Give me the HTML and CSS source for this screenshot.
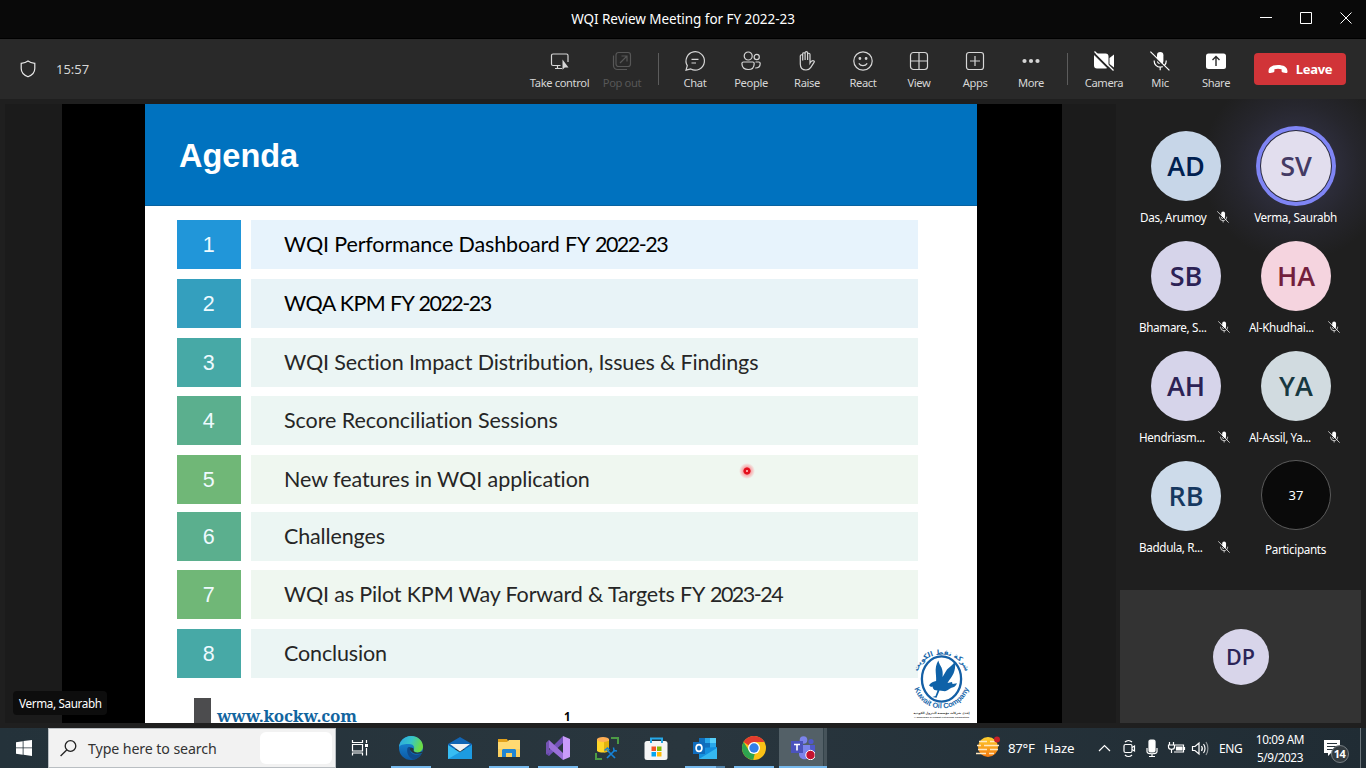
FILE: index.html
```html
<!DOCTYPE html>
<html lang="en">
<head>
<meta charset="utf-8">
<title>WQI Review Meeting for FY 2022-23</title>
<link rel="stylesheet" href="styles.css">
</head>
<body>
<svg width="0" height="0" class="defs">
  <symbol id="mic-off" viewBox="0 0 20 20">
    <rect x="7" y="1" width="6.4" height="12" rx="3.2" fill="currentColor"/>
    <path d="M4.2 9.5v.7a6 6 0 0 0 12 0v-.7M10.2 16v3.2" fill="none" stroke="currentColor" stroke-width="1.2"/>
    <path d="M0 1.8 18.5 20" stroke="var(--cut)" stroke-width="1.6"/>
    <path d="M.4.6 19.4 19.4" stroke="currentColor" stroke-width="1.2"/>
  </symbol>
</svg>
<div class="window">
  <header class="titlebar">
    <span class="title">WQI Review Meeting for FY 2022-23</span>
    <div class="controls">
      <svg width="100" height="20" viewBox="0 0 100 20" fill="none" stroke="#fff"><path d="M0 8.5h12M40.5 3.5h11v11h-11zM80.500 3.5l11 11M91.500 3.5l-11 11"/></svg>
    </div>
  </header>
  <div class="toolbar">
    <svg class="shield" width="16" height="18" viewBox="0 0 16 18" fill="none" stroke="#e8e8e8" stroke-width="1.2"><path d="M8 1C6 2.500 3.700 3 1.200 3.300v5.200C1.200 12.500 3.500 15 8 16.800c4.500-1.800 6.800-4.300 6.800-8.300V3.300C12.300 3 10 2.500 8 1z"/></svg>
    <span class="clock">15:57</span>
    <nav class="tools">
      <div class="tool wide"><svg viewBox="0 0 20 20"><path d="M10.500 14.500H3a1.500 1.500 0 0 1-1.500-1.500V4.500A1.500 1.500 0 0 1 3 3h13.500A1.500 1.500 0 0 1 18 4.500V11M7.500 14.500v3M5 17.500h7"/><path class="f" d="M12.500 8.500v10.300l2.300-2.400h3.700z" stroke="none"/></svg><span>Take control</span></div>
      <div class="tool off"><svg viewBox="0 0 20 20"><rect x="4" y="1.500" width="14.500" height="14" rx="2.500"/><path d="M1.500 4.500v10a4 4 0 0 0 4 4H15M8 12l7-7M9.500 5H15v5.500"/></svg><span>Pop out</span></div>
      <i class="sep"></i>
      <div class="tool"><svg viewBox="0 0 20 20"><path d="M1 19.200l1.300-4.600A9.200 9.200 0 1 1 5.800 18zM6.500 8.300h7M6.500 12h4.500"/></svg><span>Chat</span></div>
      <div class="tool"><svg viewBox="0 0 20 20"><circle cx="7.200" cy="5" r="4"/><circle cx="15.700" cy="6" r="2.600"/><path d="M2.500 11h9.300c.9 0 1.400.6 1.400 1.400 0 4-2 6.100-6 6.100s-6.300-2.100-6.300-6c0-.9.600-1.500 1.600-1.500zM14.500 11h3.200c1 0 1.500.6 1.500 1.400 0 3-1.800 4.600-5 4.600"/></svg><span>People</span></div>
      <div class="tool"><svg viewBox="0 0 20 20"><path d="M3.300 13V5c0-1.700 2.400-1.700 2.400 0v4.500V3c0-1.700 2.400-1.700 2.400 0v6-7.200c0-1.700 2.500-1.700 2.500 0V9 3.500c0-1.700 2.400-1.700 2.400 0V12c.8-1.400 2.400-2.800 4-2 .8.500.2 1.300-.3 1.900l-2.900 4.400C12.600 18.200 11.500 19 9 19c-4 0-5.700-2.500-5.700-6z"/></svg><span>Raise</span></div>
      <div class="tool"><svg viewBox="0 0 20 20"><circle cx="10" cy="10" r="9.200"/><path d="M5.800 12.300c2 3 6.400 3 8.400 0"/><circle class="f" cx="6.900" cy="7.500" r=".8"/><circle class="f" cx="13.100" cy="7.500" r=".8"/></svg><span>React</span></div>
      <div class="tool"><svg viewBox="0 0 20 20"><rect x="1.500" y="1.500" width="17" height="17" rx="3"/><path d="M10 1.500v17M1.500 10h17"/></svg><span>View</span></div>
      <div class="tool"><svg viewBox="0 0 20 20"><rect x="1.500" y="1.500" width="17" height="17" rx="2.500"/><path d="M10 5v10M5 10h10"/></svg><span>Apps</span></div>
      <div class="tool"><svg viewBox="0 0 20 20"><g class="f" stroke="none"><circle cx="3.500" cy="10" r="2.100"/><circle cx="10" cy="10" r="2.100"/><circle cx="16.500" cy="10" r="2.100"/></g></svg><span>More</span></div>
      <i class="sep"></i>
      <div class="tool white"><svg viewBox="0 0 20 20"><path class="f" stroke="none" d="M3 2.500h8.500A3 3 0 0 1 14.500 5.500v9a3 3 0 0 1-3 3H3a3 3 0 0 1-3-3v-9a3 3 0 0 1 3-3zM15.500 7l4.500-3.500v13L15.500 13z"/><path d="M-.5 2 18 20.500" stroke="#292929" stroke-width="2"/><path d="M.5.500 19.500 19.500"/></svg><span>Camera</span></div>
      <div class="tool white"><svg class="plain"><use href="#mic-off"/></svg><span>Mic</span></div>
      <div class="tool white"><svg viewBox="0 0 20 20"><rect class="f" x="0" y="2.500" width="20" height="15.500" rx="2.500" stroke="none"/><path d="M10 15V5.800M6.500 9 10 5.500 13.500 9" stroke="#292929" stroke-width="1.400"/></svg><span>Share</span></div>
    </nav>
    <button class="leave"><svg width="20" height="10" viewBox="0 0 20 10"><path fill="#fff" d="M.5 7.500C.5 3 4.500 1 10 1s9.500 2 9.500 6.500c0 1.300-.7 1.700-1.800 1.500l-2.600-.5c-1.200-.3-1.500-.8-1.500-1.800V5.300c-2-.8-5.200-.8-7.200 0v1.400c0 1-.3 1.500-1.500 1.800L2.300 9C1.200 9.200.5 8.800.5 7.500z"/></svg><span>Leave</span></button>
  </div>
  <main class="main">
    <section class="stage">
      <div class="share">
        <article class="slide">
          <h1><span>Agenda</span></h1>
          <ol class="agenda">
            <li><b class="c1">1</b><p class="b1 t1">WQI Performance Dashboard FY <span>2022-23</span></p></li>
            <li><b class="c2">2</b><p class="b2 t2">WQA KPM FY <span>2022-23</span></p></li>
            <li><b class="c3">3</b><p class="b3">WQI Section Impact Distribution, Issues &amp; Findings</p></li>
            <li><b class="c4">4</b><p class="b4 t4">Score Reconciliation Sessions</p></li>
            <li><b class="c5">5</b><p class="b5 t4">New features in WQI application</p></li>
            <li><b class="c4">6</b><p class="b4">Challenges</p></li>
            <li><b class="c5">7</b><p class="b5">WQI as Pilot KPM Way Forward &amp; Targets FY <span>2023-24</span></p></li>
            <li><b class="c3">8</b><p class="b3">Conclusion</p></li>
          </ol>
          <footer class="slide-foot"><i></i><a>www.kockw.com</a><em>1</em></footer>
          <svg class="koc" width="62" height="74" viewBox="0 0 62 74">
            <ellipse cx="29.500" cy="32" rx="19.600" ry="22.600" fill="#fff" stroke="#145fa5" stroke-width="2.300"/>
            <path fill="#0f62a8" d="M26.300 13.500c-2.300 4-3 8-2.500 12.500.2 3 .5 5.500.3 8-2.500.3-5 1.500-7.300 4.500 1.200.3 1.700.6 2 1.500l1.700-.6c.3 1.600.8 2.600 2 3.600l3 .5-2 5.500-3 .9 4 .8 3-7.200 5.500.7c3-.8 4.500-3 6.500-3.500 2.500-.2 4.500-1.700 5.500-4.500l-4.500.7-.5-1.900-4.500 1c2-3.500 4-5.500 6-9.500 1.500-3.500 2-7 1.500-12-2.500 4-5.500 5.500-8 8l-4.500 7.500c.5-3.500.2-6.500-1-9.500-1-2-2.500-4-3.200-7z"/>
            <path id="arc-top" d="M5.500 26C10 1.500 49 1.500 53.500 26" fill="none"/>
            <path id="arc-bottom" d="M1 37C8 69.500 51 69.500 58 37" fill="none"/>
            <text class="ar"><textPath href="#arc-top" startOffset="50%" text-anchor="middle">شركة نفط الكويت</textPath></text>
            <text class="en"><textPath href="#arc-bottom" startOffset="50%" text-anchor="middle">Kuwait Oil Company</textPath></text>
            <text class="tiny-ar" x="29.500" y="67" text-anchor="middle">إحدى شركات مؤسسة البترول الكويتية</text>
            <text class="tiny-en" x="29.500" y="70.800" text-anchor="middle">A Subsidiary of Kuwait Petroleum Corporation</text>
          </svg>
          <span class="laser"></span>
        </article>
        <span class="presenter"><span>Verma, Saurabh</span></span>
      </div>
    </section>
    <aside class="people">
      <div class="grid">
        <div class="person"><div class="avatar ad">AD</div><div class="name das"><span>Das, Arumoy</span><svg><use href="#mic-off"/></svg></div></div>
        <div class="person"><div class="avatar sv">SV</div><div class="name center"><span>Verma, Saurabh</span></div></div>
        <div class="person"><div class="avatar sb">SB</div><div class="name"><span>Bhamare, S...</span><svg><use href="#mic-off"/></svg></div></div>
        <div class="person"><div class="avatar ha">HA</div><div class="name"><span>Al-Khudhai...</span><svg><use href="#mic-off"/></svg></div></div>
        <div class="person"><div class="avatar sb">AH</div><div class="name"><span>Hendriasm...</span><svg><use href="#mic-off"/></svg></div></div>
        <div class="person"><div class="avatar ya">YA</div><div class="name"><span>Al-Assil, Ya...</span><svg><use href="#mic-off"/></svg></div></div>
        <div class="person"><div class="avatar rb">RB</div><div class="name"><span>Baddula, R...</span><svg><use href="#mic-off"/></svg></div></div>
        <div class="person"><div class="avatar count">37</div><div class="name center low"><span>Participants</span></div></div>
      </div>
      <div class="self"><div class="avatar dp">DP</div></div>
    </aside>
  </main>
</div>
<div class="taskbar">
  <div class="start"><svg width="16" height="16" viewBox="0 0 16 16" fill="#fff"><path d="M0 2.200 6.700 1.200v6.300H0zM7.500 1.100 16 0v7.500H7.500zM0 8.300h6.700v6.400L0 13.700zM7.500 8.300H16V16l-8.500-1.200z"/></svg></div>
  <div class="search">
    <svg width="17" height="17" viewBox="0 0 17 17" fill="none" stroke="#222" stroke-width="1.300"><circle cx="10.500" cy="6" r="5.300"/><path d="M6.700 10 .6 16"/></svg>
    <span>Type here to search</span><i></i>
  </div>
  <div class="tview"><svg width="18" height="18" viewBox="0 0 18 18" fill="none" stroke="#fff" stroke-width="1.200"><path d="M1.500 1v2.500h10V1M1.500 16.500V14h10v2.500M1.500 5.500h10v6.500h-10zM15.500 1v3M15.500 9v7.500"/><path d="M14 5h3v3h-3z" fill="#fff" stroke="none"/></svg></div>
  <div class="apps">
    <div class="app on"><svg viewBox="0 0 24 24">
      <defs><linearGradient id="e1" x1="0" y1="0" x2="1" y2=".3"><stop offset="0" stop-color="#2ba4e4"/><stop offset=".55" stop-color="#37c6c8"/><stop offset="1" stop-color="#6bdc45"/></linearGradient><linearGradient id="e2" x1="0" y1="0" x2="0" y2="1"><stop offset="0" stop-color="#1b92e0"/><stop offset="1" stop-color="#0c59a4"/></linearGradient></defs>
      <circle cx="12" cy="12" r="12" fill="url(#e2)"/>
      <path fill="url(#e1)" d="M0 11C.5 5 5.500 0 12 0c7 0 12 5 12 10.500 0 4-3 6-6 6-2.500 0-4-1-3.500-2.200C16.500 11 14 8 10.500 8 6 8 2 8 0 11z"/>
      <path fill="#104b8b" d="M8.500 12c-1.500 5 2 11 7 11.500 3-1 5.500-3 7-6-4 2.500-9.500 1.500-11-2-.5-1.500 0-3 1.500-4-2-1-4-.7-4.500.5z"/>
      <path fill="#26353c" d="M11 12.500c1-1 2.500-1.200 3.500 0 .5 1-.3 1.700.4 2.800 1.600 2 5.300 1.500 8.300.2L22.800 17c-4 1.500-8.500.8-10.500-1.500-1-1.200-1.600-2-1.300-3z"/></svg></div>
    <div class="app"><svg viewBox="0 0 24 24"><path fill="#1265b4" d="M0 8 12 1l12 7v5H0z"/><path fill="#37bdf3" d="M0 9l12 7.500L24 9v14H0z"/><path fill="#1690db" d="M24 9v14H0z" opacity=".75"/><path fill="#f2f2f2" d="M2 8h20l-10 7.500z"/></svg></div>
    <div class="app on"><svg viewBox="0 0 24 24"><path fill="#e2a11b" d="M1 3h9l1 2v4H1z"/><path fill="#ffda72" d="M1 6h9l2-2h11v17H1z"/><path fill="#f8c64e" d="M1 13h22v8H1z" opacity=".5"/><path fill="#2186d4" d="M6 13h12l1 1v7h-4v-4H9v4H5v-7z"/></svg></div>
    <div class="app on"><svg viewBox="0 0 24 24"><path fill="#7252b8" d="M0 18V17L17 0v7L3 20z"/><path fill="#9a70d8" d="M0 7l3-3 14 13v7L3 12v5l-3 1z"/><path fill="#c99bfa" d="M17 0l7 3v18l-7 3z"/><path fill="#563d96" d="M0 7l3-3v16l-3-2z" opacity=".55"/></svg></div>
    <div class="app"><svg viewBox="0 0 24 24"><path d="M16 2h7v6M1 17v6h6" fill="none" stroke="#4c9b45" stroke-width="2"/><path fill="#ffd629" d="M2 3h12v12c-3 2-9 2-12 0z"/><path fill="#e3b30f" d="M9 5h5v10l-5 1.500z"/><ellipse cx="8" cy="3.500" rx="6" ry="2.500" fill="#ffae54"/><path d="M12 14l8 8M20 14l-8 8" stroke="#1683d9" stroke-width="1.700"/><path d="M9.500 14.500l3-2.500 2 2M18.500 11.500l.5 3 3 .5" fill="none" stroke="#1683d9" stroke-width="1.500"/></svg></div>
    <div class="app"><svg viewBox="0 0 24 24"><path d="M7 7V2.500h11V7" fill="none" stroke="#26a9e9" stroke-width="2"/><rect x=".5" y="5" width="23" height="19" rx="2.500" fill="#f5f5f5"/><path d="M7 7V4M18 7V4" stroke="#26a9e9" stroke-width="2"/><path fill="#f35325" d="M7.500 10.500H12V15H7.500z"/><path fill="#81bc06" d="M13 10.500h4.500V15H13z"/><path fill="#05a6f0" d="M7.500 16H12v4.500H7.500z"/><path fill="#ffba08" d="M13 16h4.500v4.500H13z"/></svg></div>
    <div class="app on two"><svg viewBox="0 0 24 24"><path fill="#1070be" d="M6 2h17v12H6z"/><path fill="#29a8ea" d="M12 2h5v5h-5zM17 7h6v5h-6z"/><path fill="#56d0fa" d="M17 2h6v5h-6z"/><path fill="#1490df" d="M6 12l18-1v12H6z"/><path fill="#35b8f1" d="M6 23l18-11v11z"/><path fill="#0f6cbd" d="M0 6h12v12H0z"/><ellipse cx="6" cy="12" rx="2.900" ry="3.400" fill="none" stroke="#fff" stroke-width="1.700"/></svg></div>
    <div class="app on"><svg viewBox="0 0 24 24"><circle cx="12" cy="12" r="12" fill="#fbc116"/><path fill="#e33b2e" d="M1.600 6A12 12 0 0 1 22.400 6H12v7z"/><path fill="#2ea44f" d="M1.600 6l5.600 9 5.500 3-1.500 6A12 12 0 0 1 1.600 6z"/><circle cx="12" cy="12" r="6" fill="#fff"/><circle cx="12" cy="12" r="4.700" fill="#327ee9"/></svg></div>
    <div class="app on active"><svg viewBox="0 0 24 24"><circle cx="12.500" cy="4" r="3.800" fill="#7b83eb"/><circle cx="20" cy="5.500" r="2.600" fill="#5059c9"/><path fill="#5059c9" d="M16 9h8v8c0 3-4 4-6 3z"/><path fill="#7b83eb" d="M8 9h11v9c0 7-11 7-11 0z"/><path fill="#4b53bc" d="M0 5h12v12H0z"/><path d="M3 8.500h6M6 8.500v6" stroke="#fff" stroke-width="1.600"/><circle cx="19.500" cy="19" r="4.700" fill="#c4122f" stroke="#fff"/></svg></div>
  </div>
  <div class="tray">
    <div class="haze"><svg width="25" height="22" viewBox="0 0 25 22"><defs><linearGradient id="sun" x1="0" y1="0" x2="0" y2="1"><stop offset="0" stop-color="#ffd02e"/><stop offset="1" stop-color="#f4780f"/></linearGradient></defs><circle cx="12" cy="11" r="10" fill="url(#sun)"/><path d="M3 5.500h8M14 5.500h6M1 9.500h4M8 9.500h15M2 13.500h9M14 13.500h8M0 17.500h10M13 17.500h5" stroke="#ffe7bf" stroke-width="1.300"/><circle cx="21" cy="3.500" r="3" fill="#c82127"/></svg></div>
    <span class="temp">87°F</span><span class="cond">Haze</span>
    <svg class="ticons" width="116" height="20" viewBox="0 0 116 20" fill="none" stroke="#fff" stroke-width="1.200">
      <path d="M1 13l5.500-5.500L12 13"/>
      <rect x="26" y="6.500" width="8" height="8" rx="1.500"/><path d="M34 9.500l2.500-1.500v5L34 11.500M27 4c2-2 5-2 7 0M27 17c2 2 5 2 7 0"/>
      <rect x="51" y="2" width="6" height="12" rx="1.500" fill="#fff"/><path d="M49 10v3.500c0 3 10 3 10 0V10M54 16v2.500M51 18.500h6"/>
      <path d="M77 7h8.500v7H76"/><path d="M78.500 9H84v3h-5.500z" fill="#fff"/><path d="M86.500 9v3M71.500 4v3M75.500 4v3M70.500 7h6v2c0 3-6 3-6 0zM73.500 11v4"/>
      <path d="M94.500 8.500H97l4-3.500v11l-4-3.500h-2.500zM103.500 8c1 1.500 1 3.500 0 5M105.500 6c2 2.500 2 6.500 0 9"/><path d="M108 4c2.500 3.500 2.500 9.500 0 13" opacity=".5"/>
    </svg>
    <span class="lang">ENG</span>
    <div class="time"><span>10:09 AM</span><span>5/9/2023</span></div>
    <div class="notif"><svg width="16" height="16" viewBox="0 0 16 16"><path fill="#fff" d="M0 0h16v13H7l-3 3v-3H0z"/><path d="M3 3.500h10M3 6.500h10M3 9.500h6" stroke="#26333b"/></svg><b>14</b></div>
    <i class="peek"></i>
  </div>
</div>
</body>
</html>
```
FILE: styles.css
```css
* { box-sizing: border-box; }
body { margin: 0; width: 1366px; height: 768px; overflow: hidden; background: #1f1f1f; color: #fff; font-family: "Noto Sans", "Open Sans", sans-serif; display: flex; flex-direction: column; }
.defs { position: absolute; }
.window { height: 728px; display: flex; flex-direction: column; }
.titlebar { height: 39px; background: #090909; border-bottom: 1px solid #000; display: grid; grid-template-columns: 1fr auto 1fr; align-items: center; }
.title { grid-column: 2; font-size: 13.5px; letter-spacing: -.05px; line-height: 38px; white-space: nowrap; }
.controls { justify-self: end; padding-right: 6px; height: 20px; }
.controls svg, .tool svg, .app svg, .name svg { display: block; }
.toolbar { height: 60px; background: #292929; display: flex; align-items: center; padding: 0 20px; }
.clock { font-size: 13px; color: #d6d6d6; margin-left: 20px; }
.tools { display: flex; margin-left: auto; height: 60px; }
.tool { width: 56px; display: flex; flex-direction: column; align-items: center; padding-top: 12px; color: #d6d6d6; font-size: 11.2px; letter-spacing: -.38px; --cut: #292929; white-space: nowrap; }
.tool.wide { width: 69px; }
.tool svg { width: 20px; height: 20px; fill: none; stroke: currentColor; stroke-width: 1.2; overflow: visible; }
.tool .plain { stroke: none; }
.tool span { line-height: 16px; margin-top: 4px; }
.tool.off { color: #575757; }
.tool.white svg { color: #fff; }
.f { fill: currentColor; }
.sep { width: 17px; height: 32px; margin-top: 14px; background: linear-gradient(#5c5c5c, #5c5c5c) center / 1px 100% no-repeat; }
.shield { width: 16px; }
.leave { width: 92px; height: 32px; margin-left: 10px; border: 0; border-radius: 4px; background: #d13438; color: #fff; font: 700 13px "Noto Sans", sans-serif; letter-spacing: -.3px; display: flex; align-items: center; justify-content: center; gap: 8px; padding: 0; }
.main { flex: 1; display: flex; min-height: 0; }
.stage { width: 1116px; padding: 5px 0 5px 5px; }
.share { position: relative; height: 619px; background: linear-gradient(#000, #000) 57px 0 / 1000px 100% no-repeat #1b1b1b; padding-left: 140px; }
.slide { position: relative; width: 832px; height: 619px; background: #fff; overflow: hidden; }
h1 { margin: 0; height: 102px; background: #0072bf; border-bottom: 1px solid #0862a0; padding: 2px 0 0 34px; font: 700 32.500px/101px "Liberation Sans", sans-serif; letter-spacing: 0; }
.agenda { list-style: none; margin: 0; padding: 13.5px 0 0 31.5px; display: grid; grid-template-rows: 59px 59px 58px 59px 57px 58px 59px 49px; }
.agenda li { display: flex; gap: 10px; height: 49px; }
.agenda b { width: 64.5px; font: 400 21.5px/50px "Liberation Sans", sans-serif; text-align: center; color: #eefaff; }
.agenda p { margin: 0; width: 667px; padding-left: 33px; font: 400 21.5px/49px Lato, sans-serif; letter-spacing: -.14px; color: #262626; white-space: nowrap; }
.agenda p span { letter-spacing: -1.5px; }
.c1 { background: #2196d9; } .c2 { background: #349fbe; } .c3 { background: #47a9a6; } .c4 { background: #5baf8e; } .c5 { background: #70b777; }
.b1 { background: #e7f3fc; } .b2 { background: #e8f3f7; } .b3 { background: #ebf5f4; } .b4 { background: #ecf6f3; } .b5 { background: #eff7f0; }
.agenda .b1, .agenda .b2 { color: #000; }
.agenda .t2 { letter-spacing: -.6px; }
.agenda .t4 { letter-spacing: -.06px; }
.slide-foot { display: flex; margin: 20.5px 0 0 49px; height: 26px; }
.slide-foot i { width: 17px; background: #4c4c4e; }
.slide-foot a { width: 340px; margin-left: 6px; font: 700 17px/36px "Noto Serif", "Liberation Serif", serif; letter-spacing: -.22px; color: #12659f; }
.slide-foot em { font: 700 11.500px/37px "Noto Sans", sans-serif; color: #000; margin-left: 7px; }
.koc { position: absolute; left: 767px; top: 543px; overflow: visible; }
.koc text { fill: #1666a9; font-family: "DejaVu Sans", sans-serif; }
.koc .ar { font-size: 7px; font-weight: 700; }
.koc .en { font: 700 7.4px "Liberation Sans", sans-serif; }
.koc .tiny-ar { font-size: 3px; font-weight: 700; fill: #333; }
.koc .tiny-en { font: 700 2.5px "Liberation Sans", sans-serif; fill: #333; }
.laser { position: absolute; left: 594px; top: 359px; width: 16px; height: 16px; border-radius: 50%; background: radial-gradient(circle, #ff9d9d 0 .8px, #e3101c 1.300px 3.200px, #f8a9ab 4px, #f8b9bb00 8px); }
.presenter { position: absolute; left: 8px; top: 587px; width: 94px; height: 24px; border-radius: 4px; background: #0d0d0d; font-size: 11.7px; line-height: 24px; padding-left: 6px; white-space: nowrap; letter-spacing: -.35px; }
.people { width: 250px; padding: 32px 5px 5px 4px; display: flex; flex-direction: column; justify-content: space-between; background: radial-gradient(circle at 180px 67px, #2d2d3b 0 38px, #26262d 62px, #1f1f1f 95px), #1f1f1f; }
.grid { display: grid; grid-template-columns: 110px 110px; grid-auto-rows: 110px; margin-left: 11px; }
.avatar { width: 70px; height: 70px; margin: 0 auto; border-radius: 50%; font: 600 27px/69px "Open Sans", sans-serif; text-align: center; }
.ad { background: #c7d6e8; color: #002050; }
.sv { background: #e2deee; color: #443a64; box-shadow: 0 0 0 1px #29293a, 0 0 0 5px #7f85f5; }
.sb { background: #d6d4ea; color: #2c2255; }
.ha { background: #f5d4df; color: #731f3d; }
.ya { background: #d1dbe0; color: #173840; }
.rb { background: #cddbea; color: #163860; }
.count { background: #0a0a0a; border: 1px solid #5a5a5a; font: 400 13px/68px "Noto Sans", sans-serif; position: relative; top: -1px; }
.name { display: flex; align-items: center; height: 18px; margin-top: 7px; padding-left: 8px; font-size: 11.7px; letter-spacing: -.35px; line-height: 16px; white-space: nowrap; }
.name span { width: 79px; padding-bottom: 1px; }
.name svg { width: 12px; height: 12px; margin-top: -1px; --cut: #1f1f1f; }
.name.das { padding-left: 9px; } .das span { width: 77px; }
.name.center { justify-content: center; padding: 0 1px 0 0; }
.center span { width: auto; }
.name.low { margin-top: 9px; }
.self { height: 133px; background: #333; display: flex; align-items: center; justify-content: center; }
.avatar.dp { width: 56px; height: 56px; line-height: 55px; font-size: 21.5px; margin: 0; background: #d8d5ea; color: #2b2457; }
.taskbar { height: 40px; display: flex; background: linear-gradient(90deg, #24323a, #29363e 50%, #202c34); }
.start { width: 48px; display: flex; align-items: center; justify-content: center; }
.search { width: 288px; background: #f2f2f2; border: 1px solid #b9bec2; display: flex; align-items: center; padding-left: 11px; color: #333; font-size: 14.200px; letter-spacing: -.1px; }
.search span { margin-left: 11px; width: 172px; white-space: nowrap; }
.search i { width: 72px; height: 32px; background: #fff; border-radius: 6px; }
.tview { width: 50px; padding: 11px 0 0 15px; }
.apps { display: flex; }
.app { width: 49px; height: 40px; padding: 8px 12.5px 0; }
.app svg { width: 24px; height: 24px; }
.on { background: linear-gradient(#76b9ed, #76b9ed) 5px 38px / 40px 2px no-repeat; }
.two { background: linear-gradient(90deg, #76b9ed 31px, #5283aa 31px) 5px 38px / 40px 2px no-repeat; }
.active { width: 48px; margin-left: 1px; padding: 8px 12px 0; background: linear-gradient(#76b9ed, #76b9ed) 0 38px / 100% 2px no-repeat, linear-gradient(90deg, #536067 44px, #34434a 44px 45px, #46535a 45px); }
.tray { flex: 1; display: flex; align-items: center; padding-left: 149px; font-size: 12.5px; }
.haze { width: 31px; height: 24px; }
.temp { width: 36px; margin-left: 1px; font-size: 13.300px; letter-spacing: -.3px; }
.cond { width: 54px; font-size: 13.300px; letter-spacing: -.2px; }
.ticons { flex: none; }
.lang { width: 32px; margin-left: 5px; font-size: 12px; letter-spacing: -.4px; }
.time { width: 58px; display: flex; flex-direction: column; align-items: center; font-size: 11.8px; line-height: 18px; letter-spacing: -.4px; white-space: nowrap; padding-bottom: 1px; }
.notif { position: relative; width: 51px; height: 24px; padding: 4px 0 0 15px; }
.notif b { position: absolute; left: 21.5px; top: 9px; width: 18px; height: 18px; border-radius: 50%; border: 1px solid #777f84; background: #343c41; font-size: 11px; line-height: 15px; text-align: center; letter-spacing: -.5px; }
.peek { width: 1px; height: 40px; background: #6c767c; }
```
